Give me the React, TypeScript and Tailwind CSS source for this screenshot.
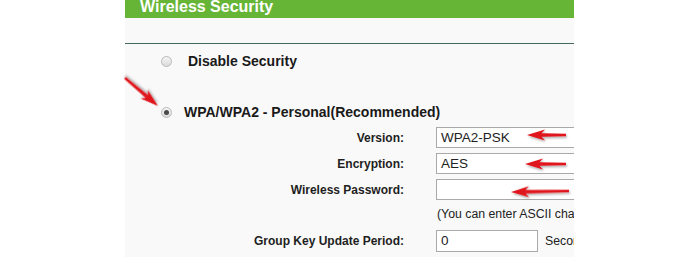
import * as React from "react"

const font = { fontFamily: '"Liberation Sans", Arial, sans-serif' }

function Arrow({ x1, y1, x2, y2 }: { x1: number; y1: number; x2: number; y2: number }) {
    // tail (x1,y1) -> tip (x2,y2)
    const len = Math.hypot(x1 - x2, y1 - y2)
    const ang = (Math.atan2(y1 - y2, x1 - x2) * 180) / Math.PI
    return (
        <g transform={`translate(${x2} ${y2}) rotate(${ang})`} filter="url(#shadow)">
            <polygon
                points={`0,0 18,-5.5 14.5,-1.7 ${len},-1.3 ${len},1.3 14.5,1.7 18,5.5`}
                fill="#e0151c"
            />
        </g>
    )
}

function Radio({ checked }: { checked?: boolean }) {
    return (
        <span className="flex h-[11px] w-[11px] items-center justify-center rounded-full border border-[#b9b9b9] bg-gradient-to-b from-[#f4f4f4] to-[#dcdcdc]">
            {checked && <span className="h-[5px] w-[5px] rounded-full bg-[#4a4a4a]" />}
        </span>
    )
}

function Row({ label, children, className = "" }: { label?: string; children: React.ReactNode; className?: string }) {
    return (
        <div className={`flex items-center ${className}`}>
            <div className="w-[279px] shrink-0 text-right text-[12px] font-bold text-[#1e1e1e]">{label}</div>
            <div className="ml-[32px] flex items-center">{children}</div>
        </div>
    )
}

const inputCls = "h-[21px] shrink-0 border border-[#a9a9a9] bg-white pl-[4px] text-[13.5px] leading-[19px] text-[#222]"

export default function App() {
    return (
        <div className="relative flex h-[257px] w-[700px] overflow-hidden bg-white" style={font}>
            <div className="ml-[125px] flex h-full w-[449px] flex-col overflow-hidden bg-[#f9f9f9]">
                {/* ── Header ── */}
                <div className="h-[18px] shrink-0 overflow-hidden bg-[#66b536] pl-[15px]">
                    <div className="text-[16px] font-bold leading-[14px] text-white">Wireless Security</div>
                </div>
                <div className="mt-[25px] h-px shrink-0 bg-[#46695a]" />

                {/* ── Modes ── */}
                <div className="mt-[7px] flex h-[20px] items-center">
                    <span className="ml-[36px]"><Radio /></span>
                    <span className="ml-[16px] text-[14px] font-bold text-[#1a1a1a]">Disable Security</span>
                </div>
                <div className="mt-[31px] flex h-[20px] items-center">
                    <span className="ml-[36px]"><Radio checked /></span>
                    <span className="ml-[12px] text-[14px] font-bold text-[#1a1a1a]">WPA/WPA2 - Personal(Recommended)</span>
                </div>

                {/* ── Fields ── */}
                <Row label="Version:" className="mt-[5px]">
                    <div className={`${inputCls} w-[160px]`}>WPA2-PSK</div>
                </Row>
                <Row label="Encryption:" className="mt-[5px]">
                    <div className={`${inputCls} w-[160px]`}>AES</div>
                </Row>
                <Row label="Wireless Password:" className="mt-[5px]">
                    <div className={`${inputCls} w-[160px]`} />
                </Row>
                <Row className="mt-[6px] h-[16px]">
                    <span className="whitespace-nowrap pl-[1px] text-[12.3px] text-[#222]">
                        (You can enter ASCII characters between 8 and 63 or Hexadecimal characters between 8 and 64.)
                    </span>
                </Row>
                <Row label="Group Key Update Period:" className="mt-[8px]">
                    <div className={`${inputCls} h-[22px] w-[102px] leading-[20px]`}>0</div>
                    <span className="ml-[7px] whitespace-nowrap text-[12.3px] text-[#222]">Seconds (Keep it default if you are not sure)</span>
                </Row>
            </div>

            {/* Red annotation arrows */}
            <svg className="pointer-events-none absolute left-0 top-0" width="700" height="257">
                <defs>
                    <filter id="shadow" x="-20%" y="-50%" width="140%" height="200%">
                        <feDropShadow dx="1" dy="1.5" stdDeviation="1" floodColor="#000" floodOpacity="0.35" />
                    </filter>
                </defs>
                <Arrow x1={125} y1={78} x2={158} y2={106} />
                <Arrow x1={566} y1={135} x2={527} y2={135} />
                <Arrow x1={566} y1={164} x2={525} y2={164} />
                <Arrow x1={569} y1={191} x2={511} y2={192} />
            </svg>
        </div>
    )
}
